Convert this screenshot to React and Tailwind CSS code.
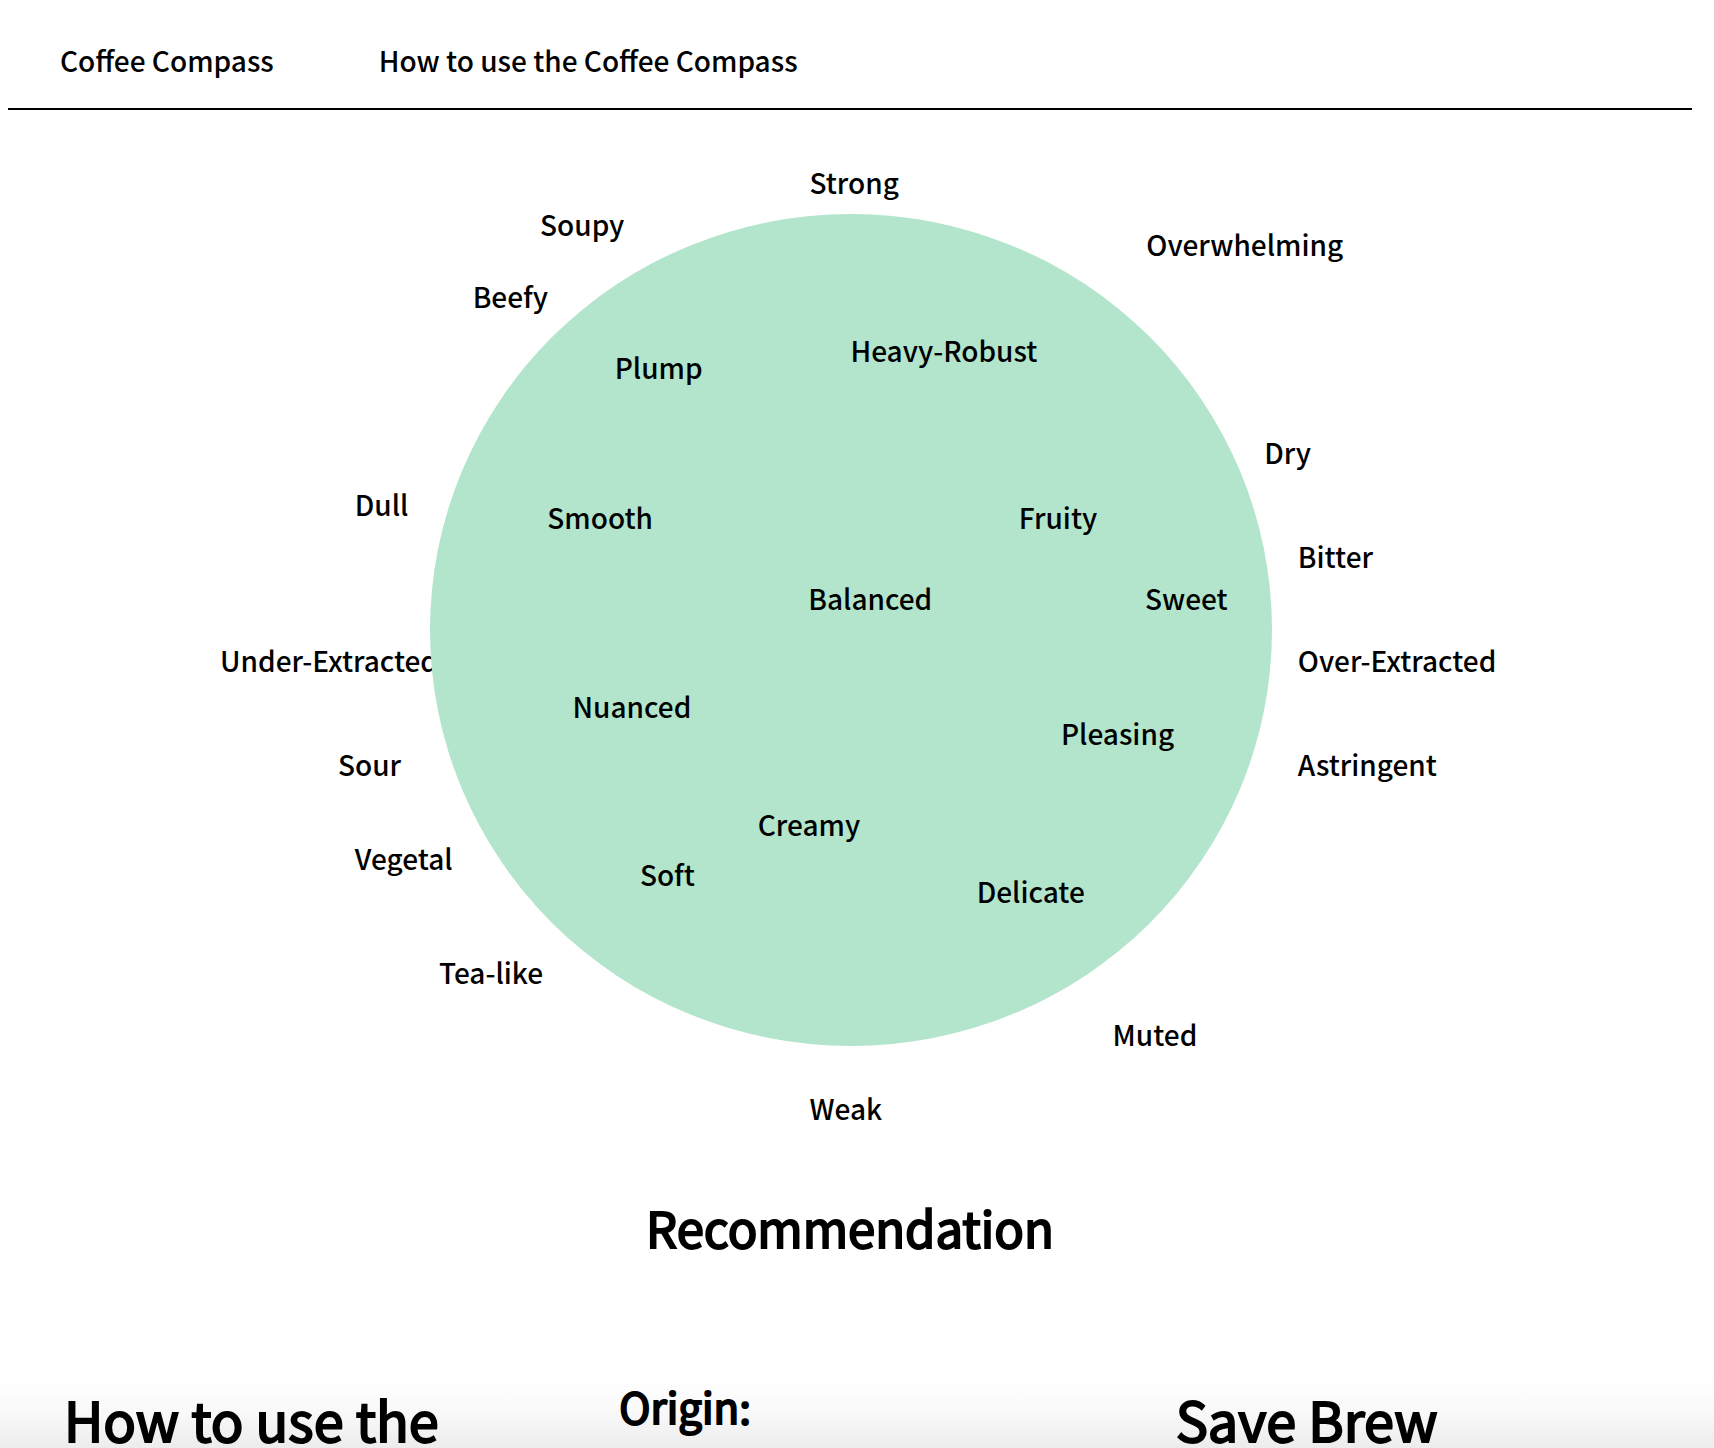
const outerTastes = [
  { name: "Strong", left: 47, top: 4 },
  { name: "Soupy", left: 31, top: 8.1 },
  { name: "Overwhelming", left: 67, top: 10 },
  { name: "Beefy", left: 27, top: 15 },
  { name: "Dry", left: 74, top: 30 },
  { name: "Dull", left: 20, top: 35 },
  { name: "Bitter", left: 76, top: 40 },
  { name: "Under-Extracted", left: 12, top: 50 },
  { name: "Over-Extracted", left: 76, top: 50 },
  { name: "Sour", left: 19, top: 60 },
  { name: "Astringent", left: 76, top: 60 },
  { name: "Vegetal", left: 20, top: 69 },
  { name: "Tea-like", left: 25, top: 80 },
  { name: "Muted", left: 65, top: 86 },
  { name: "Weak", left: 47, top: 93.1 },
];

const innerTastes = [
  { name: "Heavy-Robust", left: 49, top: 13 },
  { name: "Plump", left: 21, top: 15 },
  { name: "Smooth", left: 13, top: 33 },
  { name: "Fruity", left: 69, top: 33 },
  { name: "Balanced", left: 44, top: 42.8 },
  { name: "Sweet", left: 84, top: 42.8 },
  { name: "Nuanced", left: 16, top: 55.8 },
  { name: "Pleasing", left: 74, top: 59 },
  { name: "Creamy", left: 38, top: 70 },
  { name: "Soft", left: 24, top: 76 },
  { name: "Delicate", left: 64, top: 78 },
];

function Taste({ taste, className }) {
  return (
    <button
      type="button"
      className={`absolute whitespace-nowrap font-medium leading-[44px] ${className}`}
      style={{ left: `${taste.left}%`, top: `${taste.top}%` }}
    >
      {taste.name}
    </button>
  );
}

function Compass() {
  return (
    <section
      id="compass"
      aria-label="Coffee compass"
      className="relative aspect-[1684/1040] w-full"
    >
      {outerTastes.map((t) => (
        <Taste key={t.name} taste={t} className="px-2.5 pt-2" />
      ))}
      <div className="absolute left-[25.05%] top-[10%] h-4/5 w-1/2 rounded-[50%] bg-[#b2e5cb]">
        {innerTastes.map((t) => (
          <Taste key={t.name} taste={t} className="px-2 pt-1.5" />
        ))}
      </div>
    </section>
  );
}

export default function App() {
  return (
    <div className="relative h-screen overflow-hidden bg-white pl-2 pr-[22px] font-['Noto_Sans_CJK_SC',sans-serif] text-[28px] text-black">
      <header className="border-b-2 border-black pb-[26px] pl-[52px] pt-[38px]">
        <nav className="flex gap-[105px] font-medium leading-[44px]">
          <a href="#compass">Coffee Compass</a>
          <a href="#guide">How to use the Coffee Compass</a>
        </nav>
      </header>

      <main>
        <Compass />
        <h1 className="mt-[42px] text-center text-[49px] leading-[70px] [-webkit-text-stroke:2px_black]">
          Recommendation
        </h1>
        <div className="mt-28 grid grid-cols-3 [-webkit-text-stroke:2px_black]">
          <h2 id="guide" className="pl-14 pt-4 text-[54px] leading-[58px]">
            How to use the
          </h2>
          <h3 className="pl-[50px] text-[42px] leading-[64px]">Origin:</h3>
          <h2 className="pl-[45px] pt-4 text-[54px] leading-[58px]">Save Brew</h2>
        </div>
      </main>

      <div className="pointer-events-none absolute inset-x-0 bottom-0 h-20 bg-[linear-gradient(to_bottom,transparent,rgb(0_0_0/0.007)_30%,rgb(0_0_0/0.027)_58%,rgb(0_0_0/0.075))]" />
    </div>
  );
}
